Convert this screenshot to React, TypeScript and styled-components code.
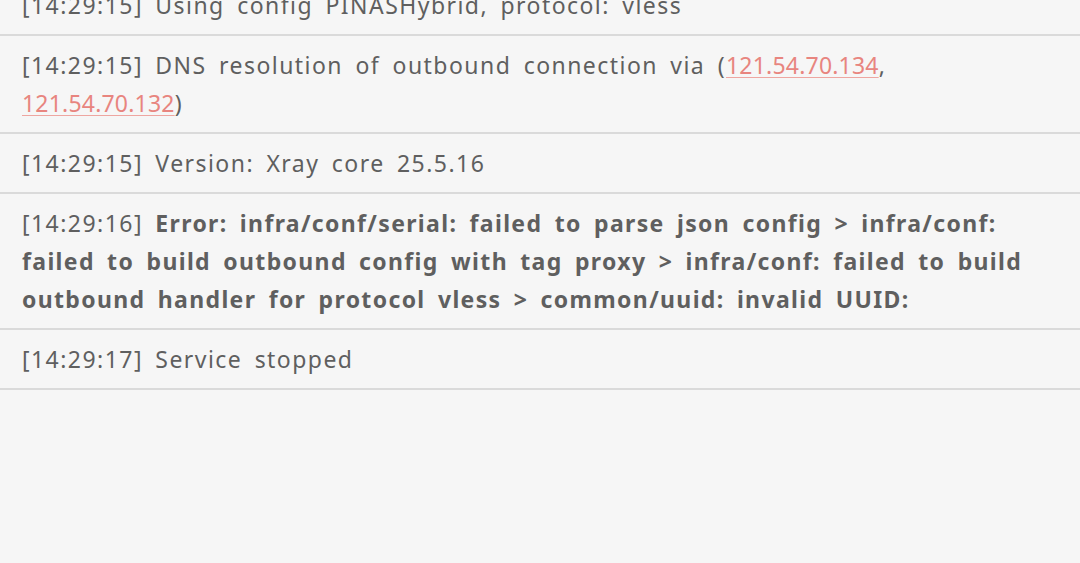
import React from "react";
import styled, { createGlobalStyle } from "styled-components";

const Global = createGlobalStyle`
  html, body { margin: 0; padding: 0; background: #f6f6f6; }
  body { width: 1080px; height: 563px; overflow: hidden; }
`;

const Screen = styled.div`
  width: 1080px;
  height: 563px;
  overflow: hidden;
  background: #f6f6f6;
`;

const LogList = styled.div`
  display: flex;
  flex-direction: column;
  margin-top: -24px;
`;

const LogRow = styled.div`
  padding: 10px 22px 10px;
  border-bottom: 2px solid #dadada;
  font-family: "Noto Sans", sans-serif;
  font-size: 23px;
  line-height: 38px;
  color: #5f5f5f;
  letter-spacing: 1.45px;
  word-spacing: 5px;
  white-space: nowrap;
`;

const Time = styled.span`
  font-weight: 400;
`;

const Msg = styled.span<{ $bold?: boolean }>`
  font-weight: ${(p) => (p.$bold ? 700 : 400)};
  letter-spacing: ${(p) => (p.$bold ? "1.35px" : "inherit")};
`;

const Ip = styled.span`
  color: #e8857f;
  letter-spacing: 0.2px;
  text-decoration: underline;
  text-decoration-color: #eea6a1;
  text-underline-offset: 3px;
  text-decoration-thickness: 1px;
`;

export default function App() {
  return (
    <Screen>
      <Global />
      <LogList>
        <LogRow>
          <Time>[14:29:15]</Time> <Msg>Using config PINASHybrid, protocol: vless</Msg>
        </LogRow>
        <LogRow>
          <Time>[14:29:15]</Time>{" "}
          <Msg>
            DNS resolution of outbound connection via (<Ip>121.54.70.134</Ip>,
            <br />
            <Ip>121.54.70.132</Ip>)
          </Msg>
        </LogRow>
        <LogRow>
          <Time>[14:29:15]</Time> <Msg>Version: Xray core 25.5.16</Msg>
        </LogRow>
        <LogRow>
          <Time>[14:29:16]</Time>{" "}
          <Msg $bold>
            Error: infra/conf/serial: failed to parse json config &gt; infra/conf:
            <br />
            failed to build outbound config with tag proxy &gt; infra/conf: failed to build
            <br />
            outbound handler for protocol vless &gt; common/uuid: invalid UUID:
          </Msg>
        </LogRow>
        <LogRow>
          <Time>[14:29:17]</Time> <Msg>Service stopped</Msg>
        </LogRow>
      </LogList>
    </Screen>
  );
}
